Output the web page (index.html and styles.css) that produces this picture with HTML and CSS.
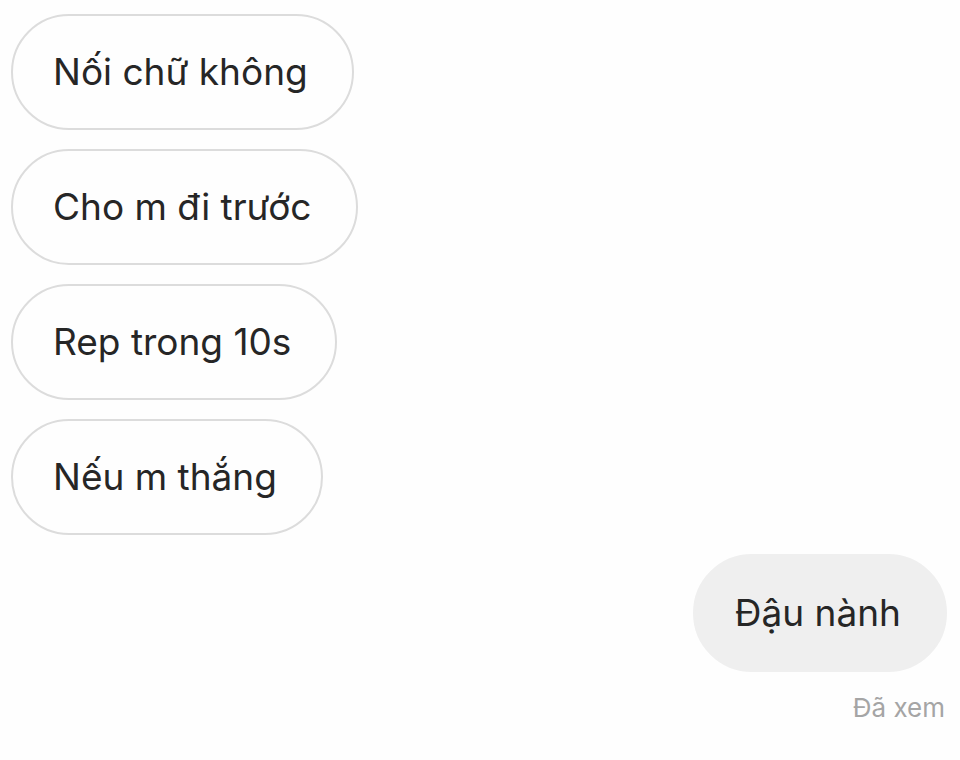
FILE: index.html
```html
<!DOCTYPE html>
<html lang="vi">
<head>
  <meta charset="UTF-8" />
  <meta name="viewport" content="width=device-width, initial-scale=1.0" />
  <title>Tin nhắn</title>
  <link rel="stylesheet" href="styles.css">
</head>
<body>
  <div class="chat">
    <div class="bubble them">Nối chữ không</div>
    <div class="bubble them">Cho m đi trước</div>
    <div class="bubble them">Rep trong 10s</div>
    <div class="bubble them">Nếu m thắng</div>
    <div class="bubble me">Đậu nành</div>
    <div class="seen">Đã xem</div>
  </div>
</body>
</html>
```

FILE: styles.css
```css
body, html {
  margin: 0;
  padding: 0;
  background-color: #fefefe;
  color: #262626;
  font-family: 'Inter', 'Roboto', sans-serif;
  height: 100vh;
  overflow: hidden;
}

.chat {
  display: flex;
  flex-direction: column;
  align-items: flex-start;
  gap: 19px;
  padding: 14px 13px 0 11px;
}

.bubble {
  font-size: 37px;
  line-height: 44px;
  padding: 34px 44px 34px 40px;
  border-radius: 60px;
  white-space: nowrap;
}

.them {
  border: 2px solid #dcdcdc;
  background: #fefefe;
}

.me {
  align-self: flex-end;
  background: #efefef;
  border: 2px solid #efefef;
  padding-top: 35px;
  padding-bottom: 35px;
  margin-top: 0;
}

.seen {
  align-self: flex-end;
  font-size: 26px;
  color: #a5a5a5;
  margin-top: 1px;
  margin-right: 2px;
}
```
